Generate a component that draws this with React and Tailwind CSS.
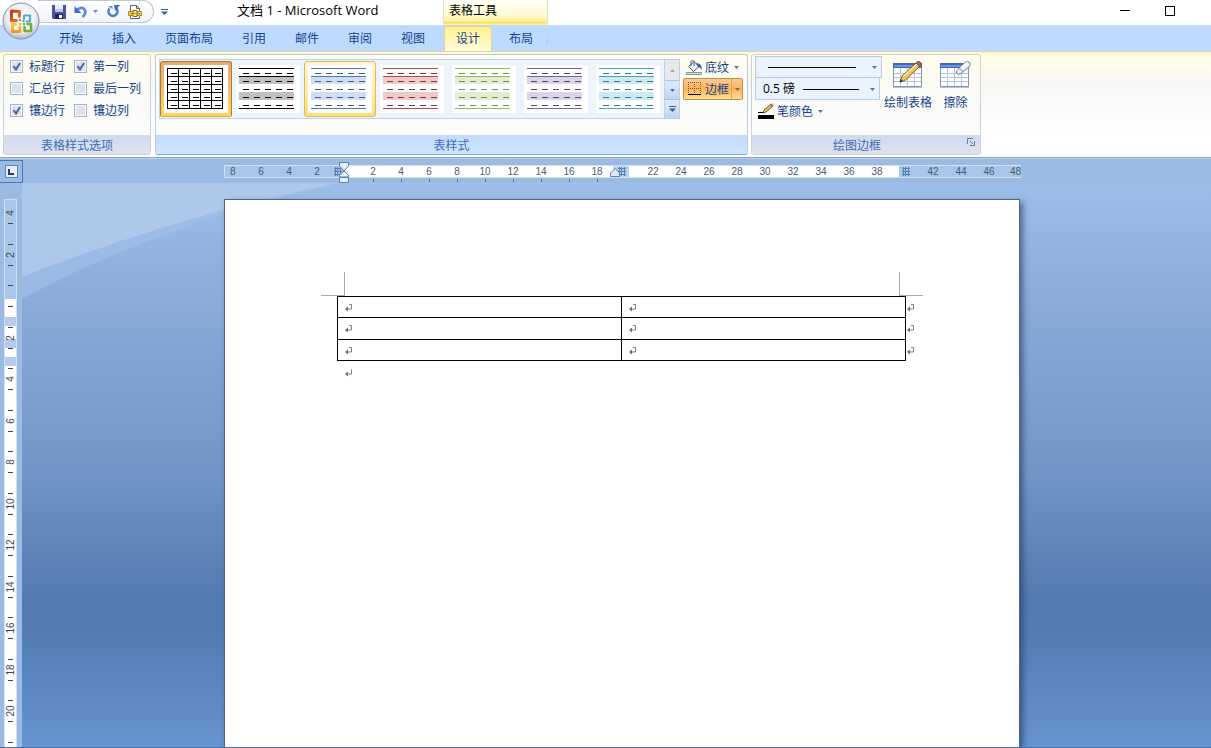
import { useState } from 'react';

const STYLES = [
  { name: '网格型', line: '#000000', dash: '#000000', grid: true },
  { name: '浅色底纹', line: '#000000', dash: '#000000', band: '#c0c0c0' },
  { name: '浅色底纹 1', line: '#4a7ab5', dash: '#3a5f94', band: '#d0def0' },
  { name: '浅色底纹 2', line: '#b5484a', dash: '#8e2f38', band: '#eccbcb' },
  { name: '浅色底纹 3', line: '#98b954', dash: '#76923c', band: '#e4ecd4' },
  { name: '浅色底纹 4', line: '#7560a0', dash: '#54447a', band: '#dad4e6' },
  { name: '浅色底纹 5', line: '#42a4be', dash: '#2f7c95', band: '#cfe9f2' },
];

const TABS = ['开始', '插入', '页面布局', '引用', '邮件', '审阅', '视图'];
const TABLE_TABS = ['设计', '布局'];

const H_RULER = [6, 4, 2, 0, 2, 4, 6, 8, 10, 12, 14, 16, 18, 20, 22, 24, 26, 28, 30, 32, 34, 36, 38, 40, 42, 44, 46];
const V_RULER = [2, 0, 2, 4, 6, 8, 10, 12, 14, 16, 18, 20];

function Arrow({ up, color = '#4f76ad' }) {
  return (
    <svg width="5" height="3" viewBox="0 0 5 3" className="shrink-0">
      <path d={up ? 'M0 3h5L2.500 0z' : 'M0 0h5L2.500 3z'} fill={color} />
    </svg>
  );
}

function BarArrow() {
  return (
    <svg width="7" height="6" viewBox="0 0 7 6" className="shrink-0">
      <path d="M0 0h7v1H0zM0 2.500h7L3.500 6z" fill="#3c5f98" />
    </svg>
  );
}

function OfficeLogo() {
  return (
    <svg width="38" height="38" viewBox="0 0 38 38">
      <defs>
        <radialGradient id="orb" cx="50%" cy="40%" r="62%">
          <stop offset="0" stopColor="#ffffff" />
          <stop offset="0.65" stopColor="#eceef3" />
          <stop offset="1" stopColor="#a9b3c4" />
        </radialGradient>
        <linearGradient id="orbRed" x1="0" y1="0" x2="1" y2="1">
          <stop offset="0" stopColor="#c8380f" />
          <stop offset="1" stopColor="#f3792a" />
        </linearGradient>
        <linearGradient id="orbYellow" x1="0" y1="0" x2="0" y2="1">
          <stop offset="0" stopColor="#fbc93c" />
          <stop offset="1" stopColor="#ee9a1c" />
        </linearGradient>
      </defs>
      <circle cx="19" cy="19" r="18" fill="url(#orb)" stroke="#8592a8" />
      <g fill="none" strokeLinejoin="round" strokeLinecap="round">
        <path d="M17.500 14.500V9.500L9.500 9v9.500H14.500" stroke="url(#orbRed)" strokeWidth="3" />
        <path d="M22 17v-3.500h6v6H24.500" stroke="#5aa9dc" strokeWidth="2.200" />
        <path d="M14 22h-3.500v7.500h7.500V25" stroke="url(#orbYellow)" strokeWidth="2.800" />
        <path d="M22.500 25v4h6.500v-7H25.500" stroke="#74ad3f" strokeWidth="2.600" />
      </g>
      <rect x="17" y="17" width="2" height="2" fill="#e8622c" />
      <rect x="20.500" y="18" width="2" height="2" fill="#4a9ed8" />
      <rect x="17" y="21" width="2" height="2" fill="#f4b41c" />
      <rect x="21" y="21" width="2" height="2" fill="#69a83a" />
    </svg>
  );
}

function SaveIcon() {
  return (
    <svg width="14" height="14" viewBox="0 0 14 14">
      <path d="M0 0h14v14H1l-1-1z" fill="#4a4fa8" />
      <path d="M3 0h8v7H3z" fill="#e6eefb" />
      <path d="M3 4h8v3H3z" fill="#b4c6ea" />
      <path d="M3 9h8v5H3z" fill="#20265e" />
      <path d="M7 10h3v3H7z" fill="#fff" />
    </svg>
  );
}

function UndoIcon() {
  return (
    <svg width="13" height="13" viewBox="0 0 13 13">
      <path d="M3 5Q8 1 10.500 4.500T8.500 12" fill="none" stroke="#5f89d4" strokeWidth="2.800" />
      <path d="M0.500 1v7h7z" fill="#3f6dc4" />
    </svg>
  );
}

function RedoIcon() {
  return (
    <svg width="13" height="13" viewBox="0 0 13 13">
      <path d="M2.500 3.500A4.500 4.500 0 1 0 9.500 3.500" fill="none" stroke="#4f7ccd" strokeWidth="2.600" />
      <path d="M7 0h6L8 6z" fill="#3f6dc4" />
      <path d="M0.500 1h5v3z" fill="#6b93db" />
    </svg>
  );
}

function PreviewIcon() {
  return (
    <svg width="14" height="14" viewBox="0 0 14 14">
      <path d="M2.500 0.500h6l3 3v10h-9z" fill="#fff" stroke="#5b6475" />
      <path d="M8.500 0.500v3h3" fill="none" stroke="#5b6475" />
      <path d="M0.500 6.500h13v4H0.500z" fill="#f2cf4e" stroke="#b38b24" />
      <path d="M5 5.500h4v6H5z" fill="#fbe893" stroke="#8a6713" />
      <path d="M2 8.500h10" stroke="#b38b24" />
    </svg>
  );
}

function BucketIcon() {
  return (
    <svg width="17" height="16" viewBox="0 0 17 16">
      <path d="M0.500 13.500h15v2h-15z" fill="#dce6e4" stroke="#7f9396" />
      <path d="M2.500 7.500L8 2.500l5 5-5.500 5z" fill="#eef2fa" stroke="#44598a" />
      <path d="M5 7V2.500Q6.500-0.500 8 2.500V7" fill="none" stroke="#44598a" />
      <path d="M10 4q6 0 6 7-2-3-4-3z" fill="#2f63ad" />
    </svg>
  );
}

function BorderIcon() {
  return (
    <svg width="14" height="14" viewBox="0 0 14 14">
      <path d="M0.500 0v12M6.500 0v12M12.500 0v12M0 0.500h13M0 6.500h13" stroke="#7a5522" strokeDasharray="1 1" fill="none" />
      <path d="M0 12h13v1H0z" fill="#000" />
    </svg>
  );
}

function PenIcon() {
  return (
    <svg width="16" height="16" viewBox="0 0 16 16">
      <path d="M5 10l1-3 7-6 2 2-7 6z" fill="#edc257" stroke="#4a3a22" strokeWidth="0.800" />
      <path d="M12 2l1.500-1.500L15.500 2 14 4z" fill="#c6665c" />
      <path d="M0 9h5v1H0zM0 12h16v4H0z" fill="#000" />
    </svg>
  );
}

function GridBase() {
  return (
    <>
      <path d="M0.500 2.500h28v23h-28z" fill="#fff" stroke="#7e93bd" />
      <path d="M0 2h29v5H0z" fill="#3f68bd" />
      <path d="M1 4h27v2H1z" fill="#6f93dc" />
      <path d="M7.500 7v18M14.500 7v18M21.500 7v18M1 12.500h27M1 16.500h27M1 20.500h27" stroke="#b5c1da" fill="none" />
      <path d="M0 26.500h29" stroke="#b9c0ce" />
    </>
  );
}

function DrawTableIcon() {
  return (
    <svg width="30" height="28" viewBox="0 0 30 28">
      <GridBase />
      <path d="M7 21l2-6L23 2l3.500 3.500L12.500 19z" fill="#f0c35c" stroke="#80622e" />
      <path d="M10.500 15.500L24 3" stroke="#fdeab0" strokeWidth="1.400" />
      <path d="M23 2l1.500-1.500h2L28 2v2l-1.500 1.500z" fill="#b5655c" stroke="#6d3f3a" strokeWidth="0.800" />
      <path d="M6.500 21.500l1.200-3.500 2.300 2.300z" fill="#333" />
    </svg>
  );
}

function EraseIcon() {
  return (
    <svg width="31" height="28" viewBox="0 0 31 28">
      <GridBase />
      <path d="M17 9.500L25.500 1q2-1 4 0.500 1.500 2 0 4L21 12.500q-2.500 1.500-4 0-1.500-1.500 0-3z" fill="#eef1f7" stroke="#6e7b95" />
      <path d="M19.500 8q3 0.500 3.500 3" fill="none" stroke="#8d99b0" />
      <path d="M21 7l6-5" stroke="#fff" strokeWidth="2" />
    </svg>
  );
}

function StyleThumb({ line, dash, band, grid }) {
  return (
    <svg width="64" height="48" viewBox="0 0 64 48" shapeRendering="crispEdges" className="block bg-white">
      {band && <path d="M3 12h55v7H3zM3 27h55v8H3z" fill={band} />}
      {grid ? (
        <path
          d="M3 3.500h56M3 11.500h56M3 19.500h56M3 27.500h56M3 35.500h56M3 43.500h56M3.500 3v41M14.500 3v41M25.500 3v41M36.500 3v41M47.500 3v41M58.500 3v41"
          stroke={line}
        />
      ) : (
        <path d="M3 3.500h55M3 11.500h55M3 43.500h55" stroke={line} />
      )}
      {[8, 16, 24, 32, 40].map((y) => (
        <path key={y} d={`M7 ${y}h6v1H7zM18 ${y}h6v1h-6zM29 ${y}h6v1h-6zM40 ${y}h6v1h-6zM51 ${y}h6v1h-6z`} fill={dash} />
      ))}
    </svg>
  );
}

function Check({ label, defaultChecked }) {
  return (
    <label className="flex h-[22px] items-center gap-[6px]">
      <span className="relative flex h-[13px] w-[13px]">
        <input
          type="checkbox"
          defaultChecked={defaultChecked}
          className="peer h-[13px] w-[13px] appearance-none border border-[#a3b3cb] bg-[#dde2ea] shadow-[inset_0_0_0_1px_#f6f8fb]"
        />
        <svg viewBox="0 0 13 13" className="pointer-events-none absolute inset-0 hidden peer-checked:block">
          <path d="M3.500 6l2.500 3.500L10 3" fill="none" stroke="#4a6496" strokeWidth="2" />
        </svg>
      </span>
      {label}
    </label>
  );
}

function Tab({ label, active, onClick }) {
  return (
    <button
      onClick={onClick}
      className={`h-[25px] rounded-t-[4px] pb-[2px] ${
        active ? 'border-x border-t border-[#e2d392] bg-linear-to-b from-[#fff08c] to-[#fffbdc] px-[11px]' : 'px-[12px]'
      }`}
    >
      {label}
    </button>
  );
}

function Group({ title, active, launcher, className, children }) {
  return (
    <section
      className={`flex h-[101px] flex-col rounded-[3px] border ${active ? 'border-[#b3cae8] border-b-[#7fa9da]' : 'border-[#cdd0d6]'} bg-linear-to-b from-[#fffdec] via-[#f9f9f8] to-white ${className}`}
    >
      <div className="flex flex-1">{children}</div>
      <div
        className={`relative flex h-[19px] items-center justify-center rounded-b-[2px] text-[#3e6db5] ${active ? 'bg-linear-to-b from-[#c1dbfd] to-[#cfe5ff]' : 'bg-linear-to-b from-[#cedbee] to-[#dfe2ee]'} ${launcher ? 'pr-[18px]' : ''}`}
      >
        {title}
        {launcher && (
          <button aria-label="对话框启动器" className="absolute top-[3px] right-[5px]">
            <svg width="8" height="8" viewBox="0 0 8 8" className="block">
              <path d="M0.500 6V0.500H6M3 3l3 3M7.500 3v4.500H3" fill="none" stroke="#5a7fb5" />
            </svg>
          </button>
        )}
      </div>
    </section>
  );
}

function ReturnMark({ end }) {
  return (
    <svg width="8" height="8" viewBox="0 0 8 8" className="block">
      <path d={end ? 'M6.500 0.500v4.500H2' : 'M4 0.500h2.500v4.500H2'} fill="none" stroke="#808080" />
      <path d="M0 5l3-2.500v5z" fill="#707070" />
    </svg>
  );
}

function ColumnMark() {
  return (
    <svg width="9" height="9" viewBox="0 0 9 9" shapeRendering="crispEdges">
      <path d="M1 1.500h8M1 4.500h8M1 7.500h8M2.500 0v9M4.500 0v9M7.500 0v9" stroke="#5b80b4" fill="none" />
    </svg>
  );
}

function HorizontalRuler() {
  return (
    <div className="relative flex h-[13px] w-[797px] border-y border-[#cfe0f6] bg-[linear-gradient(to_right,#a9c5ea_120px,#fff_120px,#fff_389px,#b9d1f0_389px,#b9d1f0_405px,#fff_405px,#fff_675px,#a9c5ea_675px)] font-['Liberation_Sans',sans-serif] text-[10px] leading-[11px] text-[#4a5a70]">
      <span className="w-[23px] border-l border-[#cfe0f6] pl-[5px]">8</span>
      {H_RULER.map((n, i) => (
        <span key={i} className="flex w-[28px] flex-col items-center">
          {i === 3 || n === 20 || n === 40 ? (
            <span className={i === 3 ? 'mr-[16px] pt-px' : n === 20 ? 'mr-[8px] pt-px' : 'pt-px'}>
              <ColumnMark />
            </span>
          ) : (
            <span>{n}</span>
          )}
          {i > 3 && i < 13 && <span className="mt-[2px] h-[3px] w-px shrink-0 bg-[#58749c]" />}
        </span>
      ))}
      <span className="w-[18px] pl-[7px]">48</span>
      <svg width="10" height="21" viewBox="0 0 10 21" className="absolute -top-[4px] left-[115px]">
        <path d="M0.500 0.500h9V4L5 9 0.500 4zM5 9l4.500 4v2h-9v-2z" fill="#e8eef8" stroke="#5d80b3" />
        <path d="M0.500 15.500h9v5h-9z" fill="#e8eef8" stroke="#5d80b3" />
      </svg>
      <svg width="10" height="9" viewBox="0 0 10 9" className="absolute top-[2px] left-[386px]">
        <path d="M0.500 8.500V5L5 0.500 9.500 5v3.500z" fill="#dfe8f5" stroke="#5d80b3" />
      </svg>
    </div>
  );
}

function VerticalRuler() {
  return (
    <div className="mt-[16px] ml-[4px] flex w-[13px] flex-col items-center overflow-hidden border border-b-0 border-[#cfe0f6] bg-[linear-gradient(to_bottom,#a9c5ea_99px,#fff_99px,#fff_117px,#b5cbea_117px,#b5cbea_126px,#fff_126px,#fff_139px,#b5cbea_139px,#b5cbea_148px,#fff_148px,#fff_157px,#b5cbea_157px,#b5cbea_166px,#fff_166px)] font-['Liberation_Sans',sans-serif] text-[10px] leading-[20px] text-[#3c4756]">
      <div className="flex h-[34px] shrink-0 flex-col items-center justify-end pb-[10px]">
        <span className="-rotate-90">4</span>
        <span className="h-px w-[5px] bg-[#3c4756]" />
      </div>
      {V_RULER.map((n, i) => (
        <div key={i} className={`flex shrink-0 flex-col items-center justify-center ${i % 2 ? 'h-[42px]' : 'h-[41px]'}`}>
          <span className="h-px w-[5px] bg-[#3c4756]" />
          <span className="h-[20px] -rotate-90">{n === 0 ? '' : n}</span>
          <span className="h-px w-[5px] bg-[#3c4756]" />
        </div>
      ))}
      <span className="mt-[10px] h-px w-[5px] shrink-0 bg-[#3c4756]" />
    </div>
  );
}

export default function App() {
  const [tab, setTab] = useState('设计');
  const [style, setStyle] = useState(0);

  return (
    <div className="flex h-screen flex-col overflow-hidden border-b border-[#4470b0] bg-[#9bbbe3] font-['Noto_Sans_CJK_SC',sans-serif] text-[12px] leading-[16px] text-[#15428b]">
      {/* Title bar */}
      <header className="relative flex h-[25px] shrink-0 bg-white">
        <button aria-label="Office 按钮" className="absolute top-[2px] left-[2px] z-10 rounded-full">
          <OfficeLogo />
        </button>
        <div className="ml-[38px] flex h-[23px] w-[116px] items-center rounded-r-full border border-l-0 border-[#c3c8d2] bg-linear-to-b from-white to-[#f1f3f8] pl-[14px]">
          <button aria-label="保存"><SaveIcon /></button>
          <button aria-label="撤消" className="ml-[8px]"><UndoIcon /></button>
          <button aria-label="撤消列表" className="ml-[6px]"><Arrow color="#7189b3" /></button>
          <button aria-label="恢复" className="ml-[9px]"><RedoIcon /></button>
          <button aria-label="打印预览" className="ml-[8px]"><PreviewIcon /></button>
        </div>
        <button aria-label="自定义快速访问工具栏" className="ml-[7px] h-[23px]"><BarArrow /></button>
        <h1 className="ml-[69px] w-[206px] pt-px font-['Open_Sans','Noto_Sans_CJK_SC',sans-serif] text-[13px] leading-[18px] text-black">
          文档 1 - Microsoft Word
        </h1>
        <div className="w-[105px] border-x border-[#e2e2c8] bg-[linear-gradient(to_bottom,#fffef6,#fffbd6_55%,#fff3a0_84%,#fbe250_90%,#fff6ba)] pt-[2px] pl-[5px] text-black">
          表格工具
        </div>
        <div className="ml-auto flex items-start">
          <button aria-label="最小化" className="flex h-[21px] w-[45px] items-center justify-center">
            <span className="h-px w-[10px] bg-black" />
          </button>
          <button aria-label="最大化" className="mr-[19px] flex h-[21px] w-[45px] items-center justify-center">
            <span className="h-[10px] w-[10px] border border-black" />
          </button>
        </div>
      </header>

      {/* Tabs */}
      <nav className="flex h-[26px] shrink-0 items-end bg-[#bedaff] pl-[47px]">
        <div className="flex w-[396px] gap-[5px]">
          {TABS.map((t) => (
            <Tab key={t} label={t} active={tab === t} onClick={() => setTab(t)} />
          ))}
        </div>
        <div className="flex gap-[5px] pl-px">
          {TABLE_TABS.map((t) => (
            <Tab key={t} label={t} active={tab === t} onClick={() => setTab(t)} />
          ))}
        </div>
        <span className="ml-[2px] h-[20px] w-px self-start bg-linear-to-b from-[#dfe0cc] to-[#a9c6ee]" />
      </nav>

      {/* Ribbon */}
      <div className="flex h-[107px] shrink-0 gap-[4px] border-t border-b border-t-[#d8d3b4] border-b-[#88a4cb] bg-[linear-gradient(to_bottom,#fff9d2,#fffdea_8%,#fbf9ea_18%,#f6f6f5_30%,#fff_75%)] pt-[2px] pl-[3px]">
        <Group title="表格样式选项" className="w-[148px]">
          <div className="flex gap-[9px] pl-[6px]">
            <div className="flex flex-col">
              <Check label="标题行" defaultChecked />
              <Check label="汇总行" />
              <Check label="镶边行" defaultChecked />
            </div>
            <div className="flex flex-col">
              <Check label="第一列" defaultChecked />
              <Check label="最后一列" />
              <Check label="镶边列" />
            </div>
          </div>
        </Group>

        <Group title="表样式" active className="w-[593px]">
          <div className="mt-[4px] ml-[3px] flex h-[60px] border border-[#bdd0ea] bg-[#eef4fc]">
            {STYLES.map((s, i) => (
              <button
                key={s.name}
                aria-label={s.name}
                onClick={() => setStyle(i)}
                className={`mt-px flex h-[56px] w-[72px] items-center justify-center rounded-[3px] ${
                  i === style
                    ? 'border border-[#a8794a] border-b-[#d9a93c] bg-linear-to-b from-[#e9aa6c] to-[#ffd75a]'
                    : i === 2
                      ? 'border border-[#d9b96a] bg-linear-to-b from-[#fff8cf] to-[#ffdf70]'
                      : ''
                }`}
              >
                <StyleThumb {...s} />
              </button>
            ))}
            <div className="flex w-[15px] flex-col border-l border-[#bdd0ea]">
              <button aria-label="上一行" className="flex h-[20px] items-center justify-center bg-[#e6e9ee]"><Arrow up color="#a9afba" /></button>
              <button aria-label="下一行" className="flex h-[19px] items-center justify-center border-t border-[#a9c3e6] bg-linear-to-b from-[#dfeafa] to-[#c0d6f4]"><Arrow /></button>
              <button aria-label="其他" className="flex h-[19px] items-center justify-center border-t border-[#a9c3e6] bg-linear-to-b from-[#dfeafa] to-[#c0d6f4]"><BarArrow /></button>
            </div>
          </div>
          <div className="mt-px ml-[3px] flex flex-col">
            <button className="flex h-[22px] w-[60px] items-center pl-[3px]">
              <BucketIcon />
              <span className="ml-[2px]">底纹</span>
              <span className="ml-[5px]"><Arrow /></span>
            </button>
            <div className="flex h-[22px] w-[60px] rounded-[2px] border border-[#b98f55] bg-linear-to-b from-[#f9cb92] via-[#fbb259] to-[#ffe08a]">
              <button className="flex w-[47px] items-center gap-[3px] pl-[4px]">
                <BorderIcon />
                边框
              </button>
              <button aria-label="边框列表" className="flex flex-1 items-center justify-center border-l border-[#d9a860]"><Arrow color="#6b6f8a" /></button>
            </div>
          </div>
        </Group>

        <Group title="绘图边框" launcher className="-ml-px w-[230px]">
          <div className="ml-[3px] flex flex-col pt-px">
            <div className="relative flex w-[127px] items-center">
              <select aria-label="笔样式" className="h-[22px] w-full appearance-none border border-[#b5cbe8] bg-[#eaf2fc] text-transparent">
                <option>单线</option>
              </select>
              <span className="pointer-events-none absolute left-[13px] h-px w-[88px] bg-black" />
              <span className="pointer-events-none absolute right-[5px] flex"><Arrow /></span>
            </div>
            <div className="relative flex w-[125px] items-center">
              <select aria-label="笔画粗细" className="h-[22px] w-full appearance-none border border-t-0 border-[#b5cbe8] bg-[#eaf2fc] pl-[7px] font-['Open_Sans','Noto_Sans_CJK_SC',sans-serif] text-black">
                <option>0.5 磅</option>
              </select>
              <span className="pointer-events-none absolute left-[48px] h-px w-[56px] bg-black" />
              <span className="pointer-events-none absolute right-[5px] flex"><Arrow /></span>
            </div>
            <button className="flex h-[22px] items-center pl-[3px]">
              <PenIcon />
              <span className="ml-[3px]">笔颜色</span>
              <span className="ml-[5px]"><Arrow /></span>
            </button>
          </div>
          <button className="ml-[2px] flex w-[48px] flex-col items-center self-start pt-[6px]">
            <DrawTableIcon />
            <span className="mt-[5px] whitespace-nowrap">绘制表格</span>
          </button>
          <button className="ml-[8px] flex w-[31px] flex-col items-center self-start pt-[6px]">
            <EraseIcon />
            <span className="mt-[5px]">擦除</span>
          </button>
        </Group>
      </div>

      {/* Ruler row */}
      <div className="flex h-[25px] shrink-0 border-t border-[#b9cfee] pt-px">
        <button aria-label="制表符" className="flex h-[23px] w-[23px] items-center justify-center border border-l-0 border-[#4a74c0]">
          <span className="flex h-[13px] w-[13px] items-center justify-center border border-[#5e83bd] bg-[#e6eefa]">
            <span className="h-[6px] w-[6px] border-b-2 border-l-2 border-[#2a3d5c]" />
          </span>
        </button>
        <div className="flex flex-1 justify-center pt-[5px] pl-[11px]">
          <HorizontalRuler />
        </div>
      </div>

      {/* Workspace */}
      <div className="flex min-h-0 flex-1">
        <aside className="flex w-[22px] shrink-0">
          <VerticalRuler />
        </aside>
        <main className="relative flex flex-1 justify-center overflow-hidden bg-[linear-gradient(to_bottom,#9dbee8,#8aabd8_22%,#7095c6_52%,#527bb0_74%,#537db4_80%,#6793d0)] pt-[16px] pl-[11px]">
          <svg width="320" height="120" viewBox="0 0 320 120" className="absolute top-0 left-0">
            <path d="M0 0h316Q130 45 0 116z" fill="#a3c0e7" opacity="0.600" />
            <path d="M0 0h316Q150 34 0 94z" fill="#b1cbec" opacity="0.800" />
          </svg>
          <article className="relative w-[796px] border border-b-0 border-[#54667f] bg-white pt-[72px] shadow-[3px_3px_6px_rgba(30,50,90,0.6)]">
            <div className="ml-[96px] flex w-[602px] justify-between">
              <span className="h-[24px] w-[24px] border-r border-b border-[#aaaaaa]" />
              <span className="h-[24px] w-[24px] border-b border-l border-[#aaaaaa]" />
            </div>
            <table className="ml-[112px] w-[582px] table-fixed border-collapse">
              <colgroup>
                <col className="w-[284px]" />
                <col className="w-[284px]" />
                <col />
              </colgroup>
              <tbody>
                {['h-[21px]', 'h-[22px]', 'h-[21px]'].map((h, i) => (
                  <tr key={i} className={h}>
                    <td className="border border-black pt-px pl-[7px]"><ReturnMark /></td>
                    <td className="border border-black pt-px pl-[7px]"><ReturnMark /></td>
                    <td className="pt-px pl-px"><ReturnMark /></td>
                  </tr>
                ))}
              </tbody>
            </table>
            <p className="mt-[8px] ml-[120px]"><ReturnMark end /></p>
          </article>
        </main>
      </div>
    </div>
  );
}
